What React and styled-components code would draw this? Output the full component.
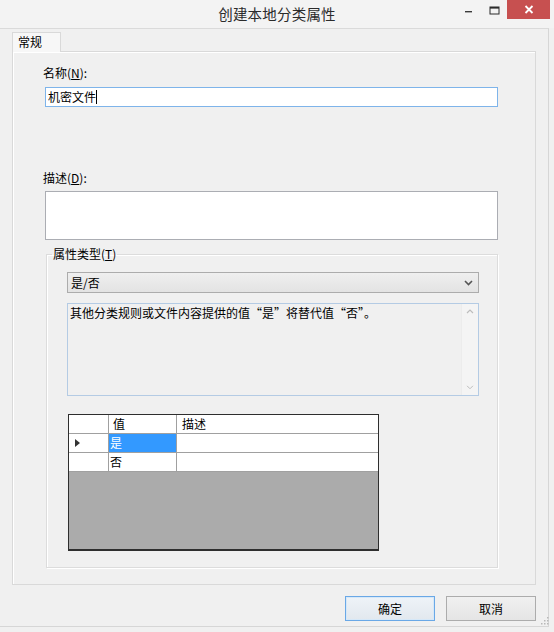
import React from "react";
import styled, { createGlobalStyle } from "styled-components";

const GlobalStyle = createGlobalStyle`
  html, body {
    margin: 0;
    padding: 0;
    background: #f0f0f0;
  }
  * {
    box-sizing: border-box;
  }
`;

const FONT = `"Noto Sans CJK SC", "Noto Sans", "Liberation Sans", sans-serif`;

const Window = styled.div`
  position: relative;
  width: 554px;
  height: 632px;
  background: #f0f0f0;
  font-family: ${FONT};
  font-size: 12px;
  color: #000;
  display: flex;
  flex-direction: column;
  overflow: hidden;
`;

const TitleBar = styled.div`
  height: 28px;
  display: grid;
  grid-template-columns: 1fr auto 1fr;
  align-items: start;
  background: #f3f3f3;
`;

const Title = styled.div`
  grid-column: 2;
  font-size: 14.5px;
  line-height: 28px;
  color: #2b2b2b;
  letter-spacing: 0.2px;
`;

const Controls = styled.div`
  grid-column: 3;
  justify-self: end;
  display: flex;
  align-items: flex-start;
  margin-right: 4px;
`;

const CtrlButton = styled.div`
  width: ${(p) => p.$w || 24}px;
  height: ${(p) => p.$h || 20}px;
  display: flex;
  align-items: center;
  justify-content: center;
  background: ${(p) => p.$bg || "transparent"};
`;

const Client = styled.div`
  width: 549px;
  height: 599px;
  border-top: 1px solid #dadada;
  border-right: 1px solid #d6d6d6;
  border-bottom: 1px solid #d6d6d6;
  padding-top: 3px;
  display: flex;
  flex-direction: column;
`;

const TabStrip = styled.div`
  display: flex;
  padding-left: 12px;
`;

const Tab = styled.div`
  position: relative;
  z-index: 1;
  width: 49px;
  height: 20px;
  margin-bottom: -1px;
  padding-left: 5px;
  border: 1px solid #d9d9d9;
  border-bottom: none;
  background: #f7f7f7;
  line-height: 18px;
`;

const Panel = styled.div`
  margin: 0 12px;
  border: 1px solid #d9d9d9;
  box-shadow: inset 1px 1px 0 #fff;
  padding: 14px 37px 16px 30px;
  display: flex;
  flex-direction: column;
`;

const Label = styled.div`
  line-height: 14px;
  height: 14px;
  margin-top: ${(p) => p.$top || 0}px;
  margin-bottom: ${(p) => p.$bottom || 6}px;
  white-space: nowrap;
`;

const TextBox = styled.div`
  margin-left: 2px;
  height: ${(p) => p.$h}px;
  background: #fff;
  border: 1px solid ${(p) => (p.$focused ? "#7eb4ea" : "#abadb3")};
  padding: 1px 2px;
  line-height: 16px;
  display: flex;
  align-items: flex-start;
`;

const Caret = styled.span`
  display: inline-block;
  width: 1px;
  height: 14px;
  margin-top: 1px;
  background: #000;
`;

const Group = styled.fieldset`
  margin: 7px 0 0 3px;
  padding: 0 0 16px 5px;
  border: 1px solid #dcdcdc;
  box-shadow: inset 1px 1px 0 #fff, 1px 1px 0 #fff;
  min-inline-size: 0;
`;

const Legend = styled.legend`
  padding: 0 1px;
  line-height: 14px;
  font-size: 12px;
`;

const GroupBody = styled.div`
  padding: 11px 18px 0 15px;
  display: flex;
  flex-direction: column;
`;

const Select = styled.div`
  height: 21px;
  border: 1px solid #acacac;
  background: linear-gradient(#efefef, #e3e3e3);
  display: flex;
  align-items: center;
  justify-content: space-between;
  padding: 0 5px 0 3px;
  line-height: 19px;
`;

const InfoBox = styled.div`
  margin-top: 10px;
  height: 93px;
  border: 1px solid #b4cbe4;
  background: #f0f0f0;
  display: flex;
`;

const InfoText = styled.div`
  flex: 1;
  padding: 1px 2px;
  line-height: 16px;
  white-space: nowrap;
`;

const ScrollBar = styled.div`
  width: 17px;
  background: #f4f4f4;
  border-left: 1px solid #ececec;
  display: flex;
  flex-direction: column;
  justify-content: space-between;
  align-items: center;
  padding: 5px 0 5px;
`;

const DataGrid = styled.div`
  margin: 18px 0 0 1px;
  width: 311px;
  height: 137px;
  border: 1px solid #2e2e2e;
  border-bottom-width: 2px;
  background: #ababab;
  display: grid;
  grid-template-columns: 40px 68px 1fr;
  grid-auto-rows: 19px;
  align-content: start;
`;

const Cell = styled.div`
  background: ${(p) => (p.$selected ? "#3399ff" : "#fff")};
  color: ${(p) => (p.$selected ? "#fff" : "#000")};
  border-right: ${(p) => (p.$last ? "none" : "1px solid #a0a0a0")};
  border-bottom: 1px solid #a0a0a0;
  padding-left: ${(p) => p.$pad ?? 1}px;
  line-height: 18px;
  display: flex;
  align-items: center;
  white-space: nowrap;
`;

const ButtonRow = styled.div`
  margin-top: 11px;
  padding-right: 12px;
  display: flex;
  justify-content: flex-end;
  gap: 11px;
`;

const Button = styled.div`
  width: 90px;
  height: 25px;
  border: 1px solid ${(p) => (p.$primary ? "#6aa8e6" : "#acacac")};
  background: ${(p) =>
    p.$primary
      ? "linear-gradient(#eef3f8, #e2e8ee)"
      : "linear-gradient(#f0f0f0, #e5e5e5)"};
  box-shadow: ${(p) => (p.$primary ? "inset 0 0 0 1px #d6e8f8" : "none")};
  display: flex;
  align-items: center;
  justify-content: center;
  line-height: 23px;
`;

const Grip = styled.svg`
  position: absolute;
  right: 5px;
  bottom: 7px;
`;

const Mnemonic = ({ ch }) => (
  <>
    (<u>{ch}</u>)
  </>
);

const ChevronDown = ({ color = "#555", w = 9, h = 6, sw = 1.6 }) => (
  <svg width={w} height={h} viewBox="0 0 9 6">
    <path d="M1 1 L4.5 4.5 L8 1" fill="none" stroke={color} strokeWidth={sw} />
  </svg>
);

const ChevronUp = ({ color = "#bdbdbd" }) => (
  <svg width="8" height="5" viewBox="0 0 8 5">
    <path d="M1 4 L4 1 L7 4" fill="none" stroke={color} strokeWidth="1.2" />
  </svg>
);

const App = () => {
  return (
    <>
      <GlobalStyle />
      <Window lang="zh-CN">
        <TitleBar>
          <Title>创建本地分类属性</Title>
          <Controls>
            <CtrlButton $w={26}>
              <svg width="8" height="8" viewBox="0 0 8 8">
                <rect x="1" y="5" width="7" height="1.4" fill="#3a3a3a" />
              </svg>
            </CtrlButton>
            <CtrlButton $w={26}>
              <svg width="11" height="9" viewBox="0 0 11 9">
                <rect x="1" y="1" width="9" height="7" fill="none" stroke="#2b2b2b" strokeWidth="1" />
                <rect x="1" y="1" width="9" height="1.6" fill="#2b2b2b" />
              </svg>
            </CtrlButton>
            <CtrlButton $w={43} $h={19} $bg="#c75050">
              <svg width="10" height="9" viewBox="0 0 10 9">
                <path d="M1.5 1 L8.5 8 M8.5 1 L1.5 8" stroke="#fff" strokeWidth="1.8" />
              </svg>
            </CtrlButton>
          </Controls>
        </TitleBar>

        <Client>
          <TabStrip>
            <Tab>常规</Tab>
          </TabStrip>
          <Panel>
            <Label $bottom={7}>
              名称<Mnemonic ch="N" />:
            </Label>
            <TextBox $h={20} $focused>
              机密文件
              <Caret />
            </TextBox>

            <Label $top={64}>
              描述<Mnemonic ch="D" />:
            </Label>
            <TextBox $h={49} />

            <Group>
              <Legend>
                属性类型<Mnemonic ch="T" />
              </Legend>
              <GroupBody>
                <Select>
                  <span>是/否</span>
                  <ChevronDown />
                </Select>
                <InfoBox>
                  <InfoText>其他分类规则或文件内容提供的值“是”将替代值“否”。</InfoText>
                  <ScrollBar>
                    <ChevronUp />
                    <ChevronDown color="#bdbdbd" w={8} h={5} sw={1.2} />
                  </ScrollBar>
                </InfoBox>
                <DataGrid>
                  <Cell />
                  <Cell $pad={4}>值</Cell>
                  <Cell $pad={5} $last>
                    描述
                  </Cell>

                  <Cell $pad={6}>
                    <svg width="5" height="8" viewBox="0 0 5 8">
                      <path d="M0 0 L5 4 L0 8 Z" fill="#333" />
                    </svg>
                  </Cell>
                  <Cell $selected>是</Cell>
                  <Cell $last />

                  <Cell />
                  <Cell>否</Cell>
                  <Cell $last />
                </DataGrid>
              </GroupBody>
            </Group>
          </Panel>

          <ButtonRow>
            <Button $primary>确定</Button>
            <Button>取消</Button>
          </ButtonRow>
        </Client>

        <Grip width="8" height="8" viewBox="0 0 8 8">
          <rect x="6" y="0" width="1.5" height="1.5" fill="#b8b8b8" />
          <rect x="3" y="3" width="1.5" height="1.5" fill="#b8b8b8" />
          <rect x="6" y="3" width="1.5" height="1.5" fill="#b8b8b8" />
          <rect x="0" y="6" width="1.5" height="1.5" fill="#b8b8b8" />
          <rect x="3" y="6" width="1.5" height="1.5" fill="#b8b8b8" />
          <rect x="6" y="6" width="1.5" height="1.5" fill="#b8b8b8" />
        </Grip>
      </Window>
    </>
  );
};

export default App;
